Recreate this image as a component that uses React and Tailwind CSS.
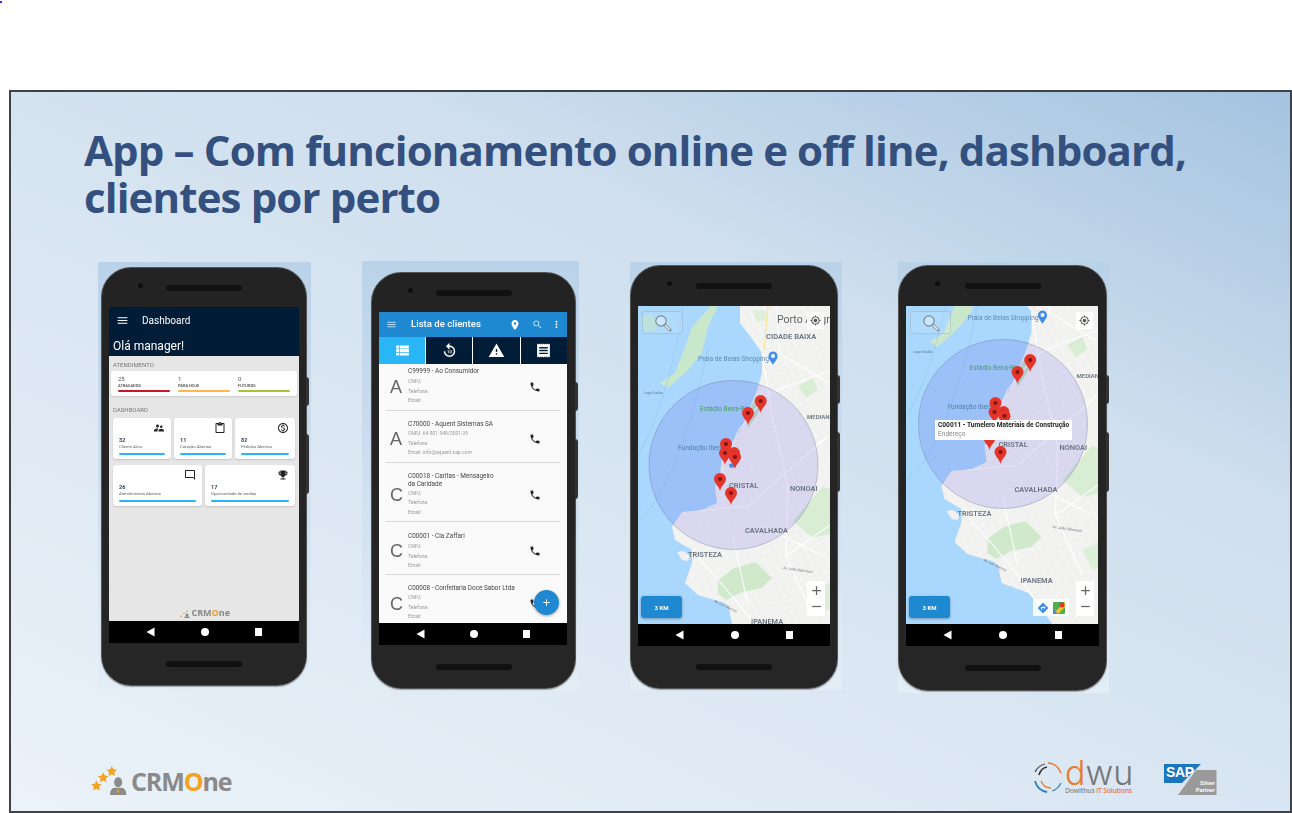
import React from "react";
import {
  MdMenu, MdPlace, MdSearch, MdMoreVert, MdViewList, MdReplay10, MdWarning, MdReceipt, MdPhone,
  MdSupervisorAccount, MdContentPaste, MdOutlineMonetizationOn, MdOutlineChatBubbleOutline, MdEmojiEvents,
  MdGpsFixed, MdAdd, MdRemove, MdDirections,
} from "react-icons/md";

const NavBar = () => (
  <div className="h-[22px] bg-black flex items-center justify-between px-[37px] shrink-0">
    <svg width="9" height="10" viewBox="0 0 9 10"><path d="M8.500 0.500V9.500L0.500 5Z" fill="#fff" /></svg>
    <div className="w-[8px] h-[8px] rounded-full bg-white" />
    <div className="w-[7.500px] h-[7.500px] bg-white" />
  </div>
);

function Phone({ w, h, top, side, children }) {
  return (
    <div className="relative rounded-[30px] bg-linear-to-b from-[#232323] to-[#262626] border border-[#555] shadow-[0_1px_1px_rgba(0,0,0,0.3)] flex flex-col" style={{ width: w, height: h }}>
      <div className="absolute right-[-3px] top-[109px] w-[3px] h-[29px] bg-[#333] rounded-r-sm" />
      <div className="absolute right-[-3px] top-[166px] w-[3px] h-[60px] bg-[#333] rounded-r-sm" />
      <div className="relative flex items-center justify-center shrink-0" style={{ height: top }}>
        <div className="w-[76px] h-[6px] rounded-full bg-[#111]" />
        <div className="absolute left-[36px] top-[15px] w-[5px] h-[5px] rounded-full bg-[#0d0d0d]" />
      </div>
      <div className="flex flex-col" style={{ marginLeft: side, marginRight: side }}>{children}</div>
      <div className="flex-1 flex items-center justify-center">
        <div className="w-[76px] h-[6px] rounded-full bg-[#111]" />
      </div>
    </div>
  );
}

function Backdrop({ w, h, pl, pt, ml, mt, children }) {
  return (
    <div className="shrink-0 bg-linear-to-b from-[#bad2e8] to-[#e3edf6] blur-[0.3px]" style={{ width: w, height: h, paddingLeft: pl, paddingTop: pt, marginLeft: ml, marginTop: mt }}>
      {children}
    </div>
  );
}

const Bar = ({ c }) => <div className={`h-[2px] rounded-full ${c}`} />;

function Atend({ n, label, c }) {
  return (
    <div className="flex-1">
      <div className="text-[6px] leading-[7px] text-[#555]">{n}</div>
      <div className="text-[4px] leading-[6px] font-medium text-[#444] mt-[0.500px] mb-[1.500px]">{label}</div>
      <Bar c={c} />
    </div>
  );
}

function DashCard({ className, icon, n, label }) {
  return (
    <div className={`bg-white rounded-[3px] h-[41px] px-[6px] pt-[4px] shadow-[0_1px_2px_rgba(0,0,0,0.15)] flex flex-col ${className}`}>
      <div className="h-[12px] flex justify-end text-[#222] text-[12px]">{icon}</div>
      <div className="text-[5.500px] leading-[7px] mt-[3px] font-bold text-[#33475b]">{n}</div>
      <div className="text-[4.200px] leading-[6px] text-[#666] mb-[3px]">{label}</div>
      <Bar c="bg-[#29b6f6]" />
    </div>
  );
}

function Dashboard() {
  return (
    <div className="flex flex-col font-['Roboto',sans-serif]">
      <div className="h-[314px] bg-[#e6e6e6] flex flex-col">
        <div className="bg-[#001c36] h-[49px] shrink-0 text-white px-[4px]">
          <div className="flex items-center h-[26px]">
            <MdMenu className="text-[13px] ml-[3px]" />
            <span className="ml-[13px] text-[10px]">Dashboard</span>
          </div>
          <div className="text-[12px] leading-[14px] mt-[6px]">Olá manager!</div>
        </div>
        <div className="text-[6px] leading-[8px] text-[#777] pl-[4px] mt-[5px]">ATENDIMENTO</div>
        <div className="mx-[2px] mt-[2px] h-[25px] bg-white rounded-[3px] px-[7px] pt-[4px] flex gap-[8px] shadow-[0_1px_2px_rgba(0,0,0,0.12)]">
          <Atend n="25" label="ATRASADOS" c="bg-[#c8162e]" />
          <Atend n="1" label="PARA HOJE" c="bg-[#ffb74d]" />
          <Atend n="0" label="FUTUROS" c="bg-[#a2c92c]" />
        </div>
        <div className="text-[6px] leading-[8px] text-[#777] pl-[4px] mt-[10px]">DASHBOARD</div>
        <div className="mx-[4px] mt-[4px] flex gap-[3px]">
          <DashCard className="w-[58px]" icon={<MdSupervisorAccount />} n="32" label="Cliente Ativo" />
          <DashCard className="w-[58px]" icon={<MdContentPaste />} n="11" label="Cotação Abertas" />
          <DashCard className="w-[60px]" icon={<MdOutlineMonetizationOn />} n="82" label="Pedidos Abertos" />
        </div>
        <div className="mx-[4px] mt-[6px] flex gap-[3px]">
          <DashCard className="w-[89px]" icon={<MdOutlineChatBubbleOutline className="-scale-x-100" />} n="26" label="Atendimentos Abertos" />
          <DashCard className="w-[90px]" icon={<MdEmojiEvents />} n="17" label="Oportunidade de vendas" />
        </div>
        <div className="mt-auto mb-[3px] flex items-center justify-end pr-[69px] gap-[1px]">
          <svg width="12" height="9" viewBox="0 0 12 9"><path d="M2 8l1-2 1 2zM5 5l1-2 1 2zM8 3l1-2 1 2z" fill="#f0a020" /><circle cx="9" cy="6" r="1.500" fill="#888" /><rect x="6.500" y="7.500" width="5" height="1.500" fill="#888" /></svg>
          <span className="font-['Open_Sans',sans-serif] font-bold text-[9px] leading-[10px] text-[#888]">CRM<span className="text-[#f0a020]">O</span>ne</span>
        </div>
      </div>
      <NavBar />
    </div>
  );
}

function ClientRow({ letter, title, cnpj = "CNPJ:", email = "Email:", h, pt, gap }) {
  return (
    <div className="relative shrink-0 flex border-b border-[#d8d8d8] mx-[7px]" style={{ height: h, paddingTop: pt }}>
      <div className="w-[22px] shrink-0 self-center mb-[5px] text-[18px] leading-[20px] pl-[4px] text-[#666] font-['Liberation_Sans',sans-serif]">{letter}</div>
      <div className="w-[106px] text-[6.400px] leading-[7.600px] text-[#444]">
        <div className="whitespace-nowrap" style={{ paddingBottom: gap }}>{title}</div>
        <div className="text-[5px] leading-[9.600px] text-[#9a9a9a]">
          <div>{cnpj}</div>
          <div>Telefone:</div>
          <div>{email}</div>
        </div>
      </div>
      <MdPhone className="self-center mb-[5px] ml-[15px] text-[12px] text-[#222]" />
    </div>
  );
}

function ClientList() {
  const tab = "flex-1 flex items-center justify-center text-white text-[17px] border-l border-white";
  return (
    <div className="flex flex-col w-[188px] font-['Roboto',sans-serif]">
      <div className="h-[25px] bg-[#1e88d0] flex items-center text-white shrink-0 pl-[7px] pr-[5px]">
        <MdMenu className="text-[11px] text-[#b8dcf4]" />
        <span className="ml-[14px] text-[9.600px] font-medium">Lista de clientes</span>
        <MdPlace className="ml-auto text-[12px]" />
        <MdSearch className="ml-[11px] text-[11px] text-[#cfe6f6]" />
        <MdMoreVert className="ml-[8px] text-[11px]" />
      </div>
      <div className="h-[27px] bg-[#001c36] flex shrink-0">
        <div className="w-[46px] flex items-center justify-center bg-[#29b6f6] text-white text-[17px]"><MdViewList /></div>
        <div className={tab}><MdReplay10 /></div>
        <div className={tab}><MdWarning /></div>
        <div className={tab}><MdReceipt /></div>
      </div>
      <div className="relative h-[259px] bg-[#fafafa] flex flex-col overflow-hidden">
        <ClientRow letter="A" title="C99999 - Ao Consumidor" h={47} pt={4} gap={1.500} />
        <ClientRow letter="A" title="C70000 - Aquent Sistemas SA" cnpj="CNPJ: 64.801.948/0001-29" email="Email: info@aquent.sap.com" h={52} pt={10} gap={0.500} />
        <ClientRow letter="C" title={<>C00018 - Caritas - Mensageiro<br />da Caridade</>} h={59} pt={10} gap={0.500} />
        <ClientRow letter="C" title="C00001 - Cia Zaffari" h={53} pt={11} gap={1.500} />
        <ClientRow letter="C" title="C00008 - Confeitaria Doce Sabor Ltda" h={53} pt={10} gap={0.500} />
        <div className="absolute left-[155px] top-[226px] w-[25px] h-[25px] rounded-full bg-[#1e88d0] shadow-[0_1px_3px_rgba(0,0,0,0.35)] flex items-center justify-center text-white text-[11px]"><MdAdd /></div>
      </div>
      <NavBar />
    </div>
  );
}

const Pin = ({ x, y }) => (
  <g transform={`translate(${x} ${y})`}>
    <path d="M0 18C-1 13-6 10-6 6A6 6 0 1 1 6 6C6 10 1 13 0 18Z" fill="#e5352b" />
    <circle cy="6" r="2.100" fill="#7c1713" />
  </g>
);

const LAND = "102,-5 102,17 115,34 124,47 124,67 120,81 115,94 104,121 94,137 84,151 82,167 77,181 79,197 64,204 44,206 34,221 37,234 54,244 54,257 47,277 60,289 87,297 91,302 94,318 121,328 144,355 148,362 148,420 205,420 205,-5";
const mono = "'Roboto',sans-serif";

function MapArt({ id, dx, dy }) {
  return (
    <svg width="192" height="318" viewBox="0 0 192 318" className="block" style={{ fontFamily: mono }}>
      <defs>
        <pattern id={id} width="8" height="6" patternUnits="userSpaceOnUse" patternTransform="rotate(-28)">
          <path d="M0 0H8M0 0V6" stroke="#fff" strokeWidth="0.8" fill="none" />
        </pattern>
      </defs>
      <rect width="192" height="318" fill="#a9d7fd" />
      <g transform={`translate(${dx} ${dy})`}>
        <polygon points="77,-5 54,21 47,41 37,67 22,77 30,82 50,64 64,47 70,21 82,-5" fill="#c9e7cb" />
        <polygon points="3,11 12,8 20,14 18,24 8,27 3,20" fill="#bfe2c3" opacity="0.6" />
        <polygon points={LAND} fill="#f1f1f0" />
        <polygon points="39,246 45,245 52,250 50,255 44,254" fill="#f1f1f0" />
        <polygon points={LAND} fill={`url(#${id})`} opacity="0.65" />
        <polygon points="80,274 96,262 118,256 134,272 124,282 104,286 88,294 80,288" fill="#d0e9cb" />
        <polygon points="155,215 185,180 205,190 205,225 175,232" fill="#d8edd3" />
        <polygon points="175,285 205,270 205,300 185,305" fill="#dcefd8" />
        <polygon points="108,110 118,92 124,90 122,104 110,122" fill="#c2e3c4" />
        <polygon points="160,80 175,72 180,84 168,92" fill="#d8edd3" />
        <polygon points="115,5 126,4 130,14 118,16" fill="#deefd9" />
        <path d="M124 47L134 110L150 180L148 250L175 310M82 170L100 125L128 90L150 80L205 60M60 205L110 200L190 130M125 220L185 250M54 244L100 297L148 362M138 0L142 48L205 85M95 230L110 300M148 250L205 210" stroke="#fff" strokeWidth="1.100" fill="none" />
        <path d="M130 0L126 44" stroke="#f8e79a" strokeWidth="1.300" fill="none" />
        <path d="M45 0C36 60 22 110 0 150M70 40C55 120 30 190 0 215" stroke="#8fc3ec" strokeWidth="0.500" fill="none" />
        <circle cx="95.500" cy="159" r="84.500" fill="#5a50e0" fillOpacity="0.16" stroke="#5a5a84" strokeOpacity="0.5" strokeWidth="0.600" />
        <text x="139" y="17" fontSize="10.500" fill="#5f6368">Porto Alegre</text>
        <text x="128" y="33" fontSize="7.600" fontWeight="600" fill="#6b7480">CIDADE BAIXA</text>
        <text x="60" y="55" fontSize="6.600" fill="#5e8bb2">Praia de Belas Shopping</text>
        <path d="M135 59C134 56 130.500 54 130.500 50A4.500 4.500 0 1 1 139.500 50C139.500 54 136 56 135 59Z" fill="#3f8de8" />
        <circle cx="135" cy="50" r="2" fill="#fff" />
        <text x="6" y="88" fontSize="3.400" fill="#5f7f9c">Lago Guaíba</text>
        <text x="62" y="105" fontSize="6.600" fill="#4f9a6b">Estádio Beira-Rio</text>
        <text x="40" y="144" fontSize="6.600" fill="#4f84a8">Fundação Iberê</text>
        <text x="169" y="113" fontSize="6" fontWeight="600" fill="#6b7480">MEDIANEIRA</text>
        <text x="91" y="182" fontSize="7.400" fontWeight="600" fill="#6b7480">CRISTAL</text>
        <text x="152" y="185" fontSize="7.400" fontWeight="600" fill="#6b7480">NONOAI</text>
        <text x="107" y="227" fontSize="7.400" fontWeight="600" fill="#6b7480">CAVALHADA</text>
        <text x="50" y="251" fontSize="7.400" fontWeight="600" fill="#6b7480">TRISTEZA</text>
        <text x="113" y="318" fontSize="7.400" fontWeight="600" fill="#6b7480">IPANEMA</text>
        <text x="76" y="296" fontSize="3.600" fill="#6b7480" transform="rotate(25 76 296)">Av. Cel. Marcos</text>
        <text x="145" y="263" fontSize="3.600" fill="#6b7480" transform="rotate(8 145 263)">Av. João Salomoni</text>
        <path d="M91 158l5 -1 1 4 -5 1z" fill="#3f8de8" />
        <Pin x={122.700} y={89} />
        <Pin x={110} y={101} />
        <Pin x={88} y={132} />
        <Pin x={96} y={141} />
        <Pin x={87} y={141} />
        <Pin x={97} y={145} />
        <Pin x={82} y={167} />
        <Pin x={93} y={181} />
      </g>
    </svg>
  );
}

const Magnifier = () => (
  <svg width="18" height="18" viewBox="0 0 18 18" fill="none">
    <circle cx="7" cy="7" r="5.200" stroke="#7b8791" strokeWidth="1.200" fill="#ffffff55" />
    <path d="M11 11L16 16" stroke="#7b8791" strokeWidth="3" strokeLinecap="round" />
    <path d="M11.500 11.500L15.500 15.500" stroke="#e8edf0" strokeWidth="1.600" strokeLinecap="round" />
  </svg>
);

function MapScreen({ id, dx, dy, width, tooltip, maps }) {
  return (
    <div className="flex flex-col font-['Roboto',sans-serif]" style={{ width }}>
      <div className="relative h-[318px] overflow-hidden">
        <MapArt id={id} dx={dx} dy={dy} />
        <div className="absolute left-[4px] top-[5px] w-[41px] h-[23px] rounded-[3px] border border-[#8fa3b5]/40 bg-white/10 flex items-center justify-center"><Magnifier /></div>
        <div className="absolute right-[6px] top-[6px] w-[17px] h-[17px] bg-white/90 flex items-center justify-center text-[#555] text-[11px]"><MdGpsFixed /></div>
        <div className="absolute right-[5px] bottom-[8px] w-[18px] h-[35px] bg-white/95 rounded-[1px] flex flex-col items-center justify-center text-[#666] text-[15px]"><MdAdd /><MdRemove className="mt-[1px]" /></div>
        {maps && (
          <div className="absolute right-[30px] bottom-[8px] w-[36px] h-[17px] bg-white/90 flex items-center justify-around px-[2px]">
            <MdDirections className="text-[12px] text-[#3f8de8]" />
            <svg width="12" height="12" viewBox="0 0 12 12"><rect width="12" height="12" rx="1" fill="#4caf50" /><path d="M0 12L12 0V5L5 12Z" fill="#fbc02d" /><path d="M0 12V7L5 12Z" fill="#3f8de8" /><circle cx="9" cy="3" r="2.500" fill="#e5352b" /></svg>
          </div>
        )}
        <div className="absolute left-[3px] bottom-[6px] w-[41px] h-[22px] rounded-[3px] bg-[#1e88d0] shadow-[0_1px_3px_rgba(0,0,0,0.3)] flex items-center justify-center text-white text-[6px] font-bold">3 KM</div>
        {tooltip && (
          <div className="absolute left-[29px] top-[114px] w-[137px] h-[20px] bg-white px-[3px] pt-[1px] text-[6.600px] leading-[9px]">
            <div className="font-bold text-[#222] whitespace-nowrap">C00011 - Tumelero Materiais de Construção</div>
            <div className="text-[#888]">Endereço</div>
          </div>
        )}
      </div>
      <NavBar />
    </div>
  );
}

function CrmLogo() {
  return (
    <div className="flex items-end">
      <svg width="38" height="31" viewBox="0 0 42 34">
        <g fill="#f0a422">
          <path d="M23 1l1.800 3.600 4 .6-2.900 2.800.7 4-3.600-1.900-3.600 1.900.7-4-2.900-2.800 4-.6z" />
          <path d="M13.500 8l1.800 3.600 4 .6-2.900 2.800.7 4-3.600-1.900-3.600 1.900.7-4-2.900-2.800 4-.6z" />
          <path d="M6 17l1.800 3.600 4 .6-2.900 2.800.7 4-3.600-1.900-3.600 1.900.7-4-2.900-2.800 4-.6z" />
        </g>
        <ellipse cx="30" cy="19" rx="4.500" ry="5.500" fill="#8b8b8b" />
        <path d="M21 33c0-6 3-8 6-8h6c3 0 6 2 6 8z" fill="#8b8b8b" />
        <path d="M30 25l-1 4 1 3 1-3z" fill="#f0a422" />
      </svg>
      <span className="ml-[2px] font-['Open_Sans',sans-serif] font-bold text-[25px] leading-[30px] text-[#8a8a8a] tracking-[-1.100px]">CRM<span className="text-[#f0a422]">O</span>ne</span>
    </div>
  );
}

function DwuLogo() {
  return (
    <div className="flex items-center">
      <svg width="30" height="34" viewBox="0 0 30 34" fill="none">
        <path d="M15 2A15 15 0 0 1 28 12" stroke="#e97b2e" strokeWidth="1.600" />
        <path d="M2 11A15 15 0 0 1 12 3" stroke="#4a4a4a" strokeWidth="1.200" />
        <path d="M6 14A10 12 0 0 1 14 6" stroke="#333" strokeWidth="1.600" />
        <path d="M2 20A15 15 0 0 0 14 31" stroke="#2f7fb8" strokeWidth="1.800" />
        <path d="M8 20A11 11 0 0 0 18 27" stroke="#e97b2e" strokeWidth="1.400" />
        <path d="M19 30A15 15 0 0 0 28 22" stroke="#2f7fb8" strokeWidth="1.200" />
      </svg>
      <div className="ml-[2px] w-[69px]">
        <div className="font-['Inter',sans-serif] font-light text-[34px] leading-[26px] text-[#777]"><span className="text-[#e97b2e]">d</span>wu</div>
        <div className="text-[6.800px] leading-[10px] font-semibold whitespace-nowrap font-['Open_Sans',sans-serif] tracking-[-0.2px] text-[#8a8a8a]">Dowithus <span className="text-[#e97b2e]">IT Solutions</span></div>
      </div>
    </div>
  );
}

function SapLogo() {
  return (
    <div className="relative w-[53px] h-[32px]">
      <svg width="53" height="32" viewBox="0 0 53 32" className="absolute inset-0">
        <polygon points="14,31 32,6 52.500,6 52.500,31" fill="#9a9a9a" />
        <polygon points="0,0 37,0 18,19 0,19" fill="#1b76bd" />
      </svg>
      <span className="absolute left-[2px] top-[0px] text-white font-['Liberation_Sans',sans-serif] font-bold text-[14px] leading-[17px] tracking-[-0.4px]">SAP</span>
      <span className="absolute right-[2px] bottom-[2px] text-right text-white font-['Liberation_Sans',sans-serif] font-bold text-[5.500px] leading-[7px]">Silver<br />Partner</span>
    </div>
  );
}

export default function App() {
  return (
    <div className="relative w-[1292px] h-[813px] bg-white overflow-hidden pt-[90px] pl-[9px]">
      <div className="absolute left-0 top-[1px] w-[2px] h-[2px] bg-[#2a2aff]" />
      <div className="w-[1283px] h-[723px] border-2 border-[#3f4347] bg-[linear-gradient(205deg,#a4c3e0_0%,#cfdfee_32%,#dbe7f3_60%,#ebf2f9_100%)] flex flex-col">
        <h1 className="pt-[34px] pl-[73px] font-['Open_Sans',sans-serif] font-bold text-[42px] leading-[47px] tracking-[-0.87px] text-[#34507f]">
          App – Com funcionamento online e off line, dashboard,<br />clientes por perto
        </h1>
        <div className="flex pl-[87px] mt-[41px] items-start">
          <Backdrop w={213} h={428} pl={3} pt={5} ml={0} mt={1}>
            <Phone w={206} h={419} top={39} side={7}><Dashboard /></Phone>
          </Backdrop>
          <Backdrop w={217} h={429} pl={9} pt={11} ml={51} mt={0}>
            <Phone w={205} h={417} top={39} side={7}><ClientList /></Phone>
          </Backdrop>
          <Backdrop w={212} h={428} pl={0} pt={3} ml={51} mt={1}>
            <Phone w={208} h={424} top={40} side={7}><MapScreen id="mapa" dx={0} dy={0} width={192} /></Phone>
          </Backdrop>
          <Backdrop w={211} h={431} pl={0} pt={3} ml={56} mt={1}>
            <Phone w={209} h={426} top={40} side={7}><MapScreen id="mapb" dx={1.500} dy={-41} width={193} tooltip maps /></Phone>
          </Backdrop>
        </div>
        <div className="flex items-end pl-[80px] pr-[73px] mt-[67px]">
          <CrmLogo />
          <div className="ml-auto"><DwuLogo /></div>
          <div className="ml-[30px]"><SapLogo /></div>
        </div>
      </div>
    </div>
  );
}
